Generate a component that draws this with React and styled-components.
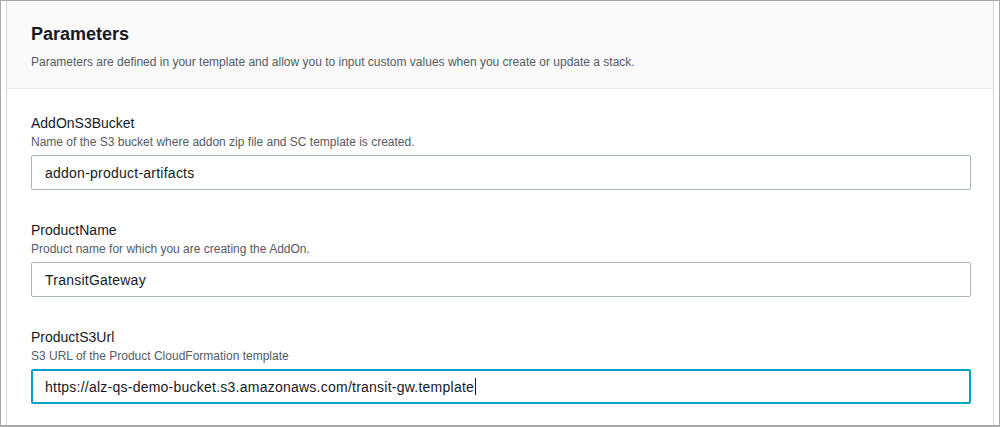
import React from "react";
import styled, { createGlobalStyle } from "styled-components";

const Global = createGlobalStyle`
  html, body { margin: 0; padding: 0; background: #fff; }
  body { font-family: "Liberation Sans", Arial, sans-serif; color: #16191f; }
`;

const Frame = styled.div`
  box-sizing: border-box;
  width: 1000px;
  height: 427px;
  border: 1px solid #a9a9a9;
  border-bottom-width: 2px;
  padding: 0 4px 0 4px;
  overflow: hidden;
  background: #fff;
`;

const Panel = styled.div`
  box-sizing: border-box;
  height: 100%;
  border-left: 1px solid #d6d6d6;
  border-right: 1px solid #d6d6d6;
  margin-left: 1px;
  margin-right: 1px;
`;

const Header = styled.div`
  background: #fafafa;
  border-bottom: 1px solid #eaeded;
  padding: 21px 24px 18px 24px;
  height: 48px;
`;

const Title = styled.h2`
  margin: 0;
  font-size: 18px;
  font-weight: 700;
  line-height: 24px;
  color: #16191f;
`;

const Desc = styled.p`
  margin: 8px 0 0;
  font-size: 12px;
  line-height: 16px;
  color: #545b64;
`;

const Body = styled.div`
  display: flex;
  flex-direction: column;
  gap: 30px;
  padding: 24px 22px 0 24px;
`;

const Field = styled.div`
  display: flex;
  flex-direction: column;
`;

const Label = styled.label`
  font-size: 14px;
  line-height: 20px;
  color: #16191f;
`;

const Hint = styled.span`
  font-size: 12px;
  line-height: 16px;
  color: #545b64;
  margin: 1px 0 5px;
`;

const Input = styled.div`
  box-sizing: border-box;
  height: 35px;
  border: ${(p) => (p.$focus ? "2px solid #00a1c9" : "1px solid #aab7b8")};
  border-radius: 2px;
  padding: 0 ${(p) => (p.$focus ? "12px" : "13px")};
  display: flex;
  align-items: center;
  font-size: 14px;
  letter-spacing: 0.24px;
  color: #16191f;
`;

const Caret = styled.span`
  display: inline-block;
  width: 1px;
  height: 17px;
  background: #16191f;
  margin-left: 1px;
`;

const fields = [
  {
    label: "AddOnS3Bucket",
    hint: "Name of the S3 bucket where addon zip file and SC template is created.",
    value: "addon-product-artifacts",
  },
  {
    label: "ProductName",
    hint: "Product name for which you are creating the AddOn.",
    value: "TransitGateway",
  },
  {
    label: "ProductS3Url",
    hint: "S3 URL of the Product CloudFormation template",
    value: "https://alz-qs-demo-bucket.s3.amazonaws.com/transit-gw.template",
    focus: true,
  },
];

export default function App() {
  return (
    <>
      <Global />
      <Frame>
        <Panel>
          <Header>
            <Title>Parameters</Title>
            <Desc>
              Parameters are defined in your template and allow you to input custom values when you create or update a stack.
            </Desc>
          </Header>
          <Body>
            {fields.map((f) => (
              <Field key={f.label}>
                <Label>{f.label}</Label>
                <Hint>{f.hint}</Hint>
                <Input $focus={f.focus}>
                  {f.value}
                  {f.focus && <Caret />}
                </Input>
              </Field>
            ))}
          </Body>
        </Panel>
      </Frame>
    </>
  );
}
